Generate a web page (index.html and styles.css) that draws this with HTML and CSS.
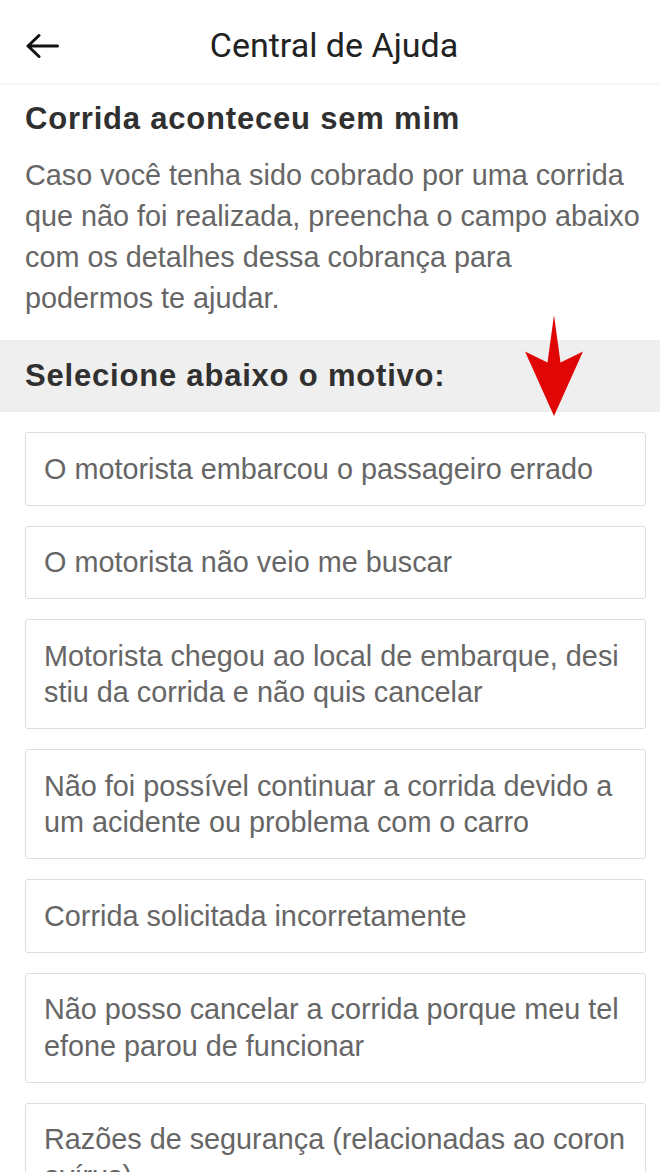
FILE: index.html
```html
<!DOCTYPE html>
<html lang="pt-BR">
<head>
<meta charset="utf-8">
<title>Central de Ajuda</title>
<link rel="stylesheet" href="styles.css">
</head>
<body>
<header class="topbar">
  <span class="back" aria-label="Voltar">
    <svg width="34" height="24" viewBox="0 0 34 24"><path d="M14 1.5 L3 12 L14 22.5 M3 12 H32.5" fill="none" stroke="#111" stroke-width="3" stroke-linecap="round" stroke-linejoin="round"/></svg>
  </span>
  <h1 class="title">Central de Ajuda</h1>
</header>
<main class="content">
  <section class="intro">
    <h2 class="intro-title">Corrida aconteceu sem mim</h2>
    <p class="intro-text">Caso você tenha sido cobrado por uma corrida que não foi realizada, preencha o campo abaixo com os detalhes dessa cobrança para podermos te ajudar.</p>
  </section>
  <div class="band">
    <h3 class="band-title">Selecione abaixo o motivo:</h3>
    <svg class="pointer" width="60" height="104" viewBox="0 0 60 104"><polygon points="30,1 36.5,48.5 59,37.5 30,102 1,37.5 23.5,48.5" fill="#e10606"/></svg>
  </div>
  <ul class="options">
    <li class="option">O motorista embarcou o passageiro errado</li>
    <li class="option">O motorista não veio me buscar</li>
    <li class="option">Motorista chegou ao local de embarque, desistiu da corrida e não quis cancelar</li>
    <li class="option">Não foi possível continuar a corrida devido a um acidente ou problema com o carro</li>
    <li class="option">Corrida solicitada incorretamente</li>
    <li class="option">Não posso cancelar a corrida porque meu telefone parou de funcionar</li>
    <li class="option">Razões de segurança (relacionadas ao coronavírus)</li>
  </ul>
</main>
</body>
</html>
```
FILE: styles.css
```css
html, body {
  margin: 0;
  padding: 0;
  background: #fff;
  overflow: hidden;
}
body {
  font-family: "Liberation Sans", Arial, sans-serif;
  width: 660px;
}
.topbar {
  height: 83px;
  box-sizing: border-box;
  padding-top: 6px;
  display: flex;
  align-items: center;
  justify-content: center;
  position: relative;
  background: #fff;
  box-shadow: 0 1px 2px rgba(0, 0, 0, 0.07);
}
.back {
  position: absolute;
  left: 25px;
  top: 34px;
  display: flex;
}
.title {
  margin: 0;
  padding-left: 8px;
  font-family: Roboto, "Liberation Sans", sans-serif;
  font-weight: 400;
  font-size: 34px;
  color: #222;
}
.intro {
  padding: 15.5px 15px 20px 25px;
}
.intro-title {
  margin: 0;
  font-size: 31px;
  letter-spacing: 0.8px;
  font-weight: 700;
  color: #303030;
  line-height: 40px;
}
.intro-text {
  margin: 16px 0 0;
  font-size: 28.8px;
  line-height: 41.3px;
  color: #666;
}
.band {
  position: relative;
  height: 72px;
  background: #efefef;
  display: flex;
  align-items: center;
  padding: 0 25px;
}
.band-title {
  margin: 0;
  font-size: 31px;
  letter-spacing: 0.8px;
  font-weight: 700;
  color: #303030;
}
.pointer {
  position: absolute;
  left: 524px;
  top: -25.5px;
}
.options {
  list-style: none;
  margin: 0;
  padding: 20.5px 14px 0 25px;
  display: flex;
  flex-direction: column;
  gap: 20px;
}
.option {
  border: 1px solid #dddddd;
  border-radius: 3px;
  padding: 17.5px 18px;
  font-size: 28.8px;
  line-height: 36.5px;
  color: #666;
  word-break: break-all;
}
```
